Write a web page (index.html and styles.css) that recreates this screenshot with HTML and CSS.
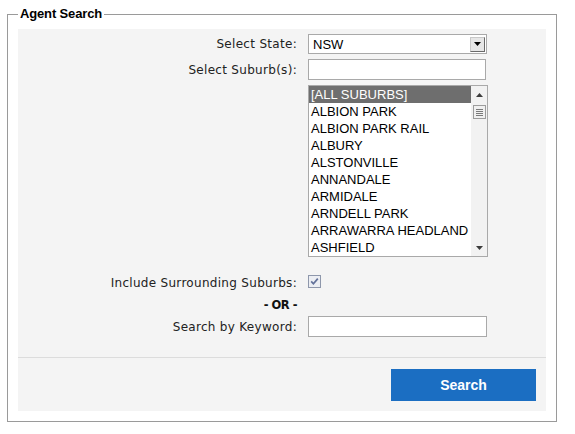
FILE: index.html
```html
<!DOCTYPE html>
<html>
<head>
<meta charset="utf-8">
<link rel="stylesheet" href="styles.css">
</head>
<body>
<fieldset class="agent-search">
  <legend class="legend">Agent Search</legend>
  <div class="panel">
    <div class="fields">
      <div class="row r-state">
        <label class="label">Select State:</label>
        <div class="select">
          <span class="select-value">NSW</span>
          <span class="select-btn"><svg width="7" height="4" viewBox="0 0 7 4"><path d="M0 0H7L3.5 4Z" fill="#000"/></svg></span>
        </div>
      </div>
      <div class="row r-suburb">
        <label class="label">Select Suburb(s):</label>
        <span class="text-input"></span>
      </div>
      <div class="row r-list">
        <span class="label"></span>
        <div class="listbox">
          <ul class="options">
            <li class="option selected">[ALL SUBURBS]</li>
            <li class="option">ALBION PARK</li>
            <li class="option">ALBION PARK RAIL</li>
            <li class="option">ALBURY</li>
            <li class="option">ALSTONVILLE</li>
            <li class="option">ANNANDALE</li>
            <li class="option">ARMIDALE</li>
            <li class="option">ARNDELL PARK</li>
            <li class="option">ARRAWARRA HEADLAND</li>
            <li class="option">ASHFIELD</li>
          </ul>
          <div class="scrollbar">
            <span class="sb-arrow"><svg width="7" height="4" viewBox="0 0 7 4"><path d="M0 4H7L3.5 0Z" fill="#3c3c3c"/></svg></span>
            <span class="sb-thumb"><span class="grip"></span><span class="grip"></span><span class="grip"></span><span class="grip"></span></span>
            <span class="sb-track"></span>
            <span class="sb-arrow"><svg width="7" height="4" viewBox="0 0 7 4"><path d="M0 0H7L3.5 4Z" fill="#3c3c3c"/></svg></span>
          </div>
        </div>
      </div>
      <div class="row r-check">
        <label class="label">Include Surrounding Suburbs:</label>
        <span class="checkbox"><svg width="13" height="13" viewBox="0 0 13 13"><rect x="0.5" y="0.5" width="12" height="12" fill="#eceef3" stroke="#8e97ab"/><path d="M3.2 6.4L5.4 8.8L9.8 3.6" fill="none" stroke="#63729a" stroke-width="1.7"/></svg></span>
      </div>
      <div class="row r-or">
        <span class="label or">- OR -</span>
      </div>
      <div class="row r-keyword">
        <label class="label">Search by Keyword:</label>
        <span class="text-input"></span>
      </div>
    </div>
    <div class="actions">
      <button class="search-btn" type="button">Search</button>
    </div>
  </div>
</fieldset>
</body>
</html>
```
FILE: styles.css
```css
html, body {
  margin: 0;
  padding: 0;
  background: #fff;
}
body {
  font-family: "DejaVu Sans", Verdana, sans-serif;
  font-size: 12px;
  color: #222;
}
.agent-search {
  margin: 6px 0 0 7px;
  width: 528px;
  padding: 7px 10px 10px 10px;
  border: 1px solid #9a9a9a;
  box-sizing: content-box;
}
.legend {
  font-family: "Liberation Sans", Arial, sans-serif;
  font-weight: bold;
  font-size: 13px;
  letter-spacing: -0.15px;
  line-height: 16px;
  padding: 0 2px;
  color: #000;
}
.panel {
  background: #f4f4f4;
}
.fields {
  padding: 5px 0 20px 0;
  border-bottom: 1px solid #dcdcdc;
  display: flex;
  flex-direction: column;
}
.row {
  display: flex;
  align-items: center;
}
.label {
  width: 279px;
  flex: none;
  padding-right: 11px;
  box-sizing: content-box;
  text-align: right;
  letter-spacing: 0.3px;
  white-space: nowrap;
}
.r-state { height: 20px; }
.r-suburb { height: 21px; margin-top: 5px; }
.r-list { margin-top: 5px; align-items: flex-start; }
.r-check { height: 20px; margin-top: 16px; }
.r-or { height: 16px; margin-top: 4px; }
.r-keyword { height: 21px; margin-top: 3px; }

.select {
  width: 179px;
  height: 20px;
  box-sizing: border-box;
  border: 1px solid #a9a9a9;
  background: #fff;
  display: flex;
  align-items: center;
  justify-content: space-between;
  font-family: "Liberation Sans", Arial, sans-serif;
  font-size: 13px;
  color: #000;
}
.select-value {
  padding-left: 4px;
}
.select-btn {
  width: 15px;
  height: 15px;
  box-sizing: border-box;
  margin-right: 1px;
  border: 1px solid;
  border-color: #c8c8c8 #6a6a6a #6a6a6a #c8c8c8;
  background: #e6e6e6;
  display: flex;
  align-items: center;
  justify-content: center;
}
.text-input {
  display: block;
  width: 178px;
  height: 21px;
  box-sizing: border-box;
  border: 1px solid #a9a9a9;
  background: #fff;
}
.r-keyword .text-input { width: 179px; }

.listbox {
  width: 180px;
  height: 172px;
  box-sizing: border-box;
  border: 1px solid #a9a9a9;
  background: #fff;
  display: flex;
}
.options {
  list-style: none;
  margin: 0;
  padding: 0;
  flex: 1;
  overflow: hidden;
  font-family: "Liberation Sans", Arial, sans-serif;
  font-size: 13px;
  color: #000;
}
.option {
  height: 17px;
  line-height: 17px;
  padding-left: 2px;
  white-space: nowrap;
}
.option.selected {
  background: #6e6e6e;
  color: #fff;
}
.scrollbar {
  width: 16px;
  flex: none;
  background: #f2f2f2;
  display: flex;
  flex-direction: column;
  align-items: center;
}
.sb-arrow {
  height: 17px;
  width: 16px;
  display: flex;
  align-items: center;
  justify-content: center;
}
.sb-thumb {
  width: 13px;
  height: 14px;
  box-sizing: border-box;
  border: 1px solid #9c9c9c;
  background: #f0f0f0;
  margin-top: 2px;
  display: flex;
  flex-direction: column;
  justify-content: center;
  align-items: center;
  gap: 1px;
}
.grip {
  width: 7px;
  height: 1px;
  background: #7a7a7a;
}
.sb-track {
  flex: 1;
}
.checkbox {
  display: block;
  width: 13px;
  height: 13px;
  align-self: flex-start;
  margin-top: 2px;
}
.checkbox svg { display: block; }
.or {
  font-weight: bold;
  font-size: 11.5px;
  letter-spacing: -0.5px;
  color: #111;
}
.actions {
  display: flex;
  justify-content: flex-end;
  padding: 11px 10px 10px 0;
}
.search-btn {
  width: 145px;
  height: 32px;
  border: none;
  margin: 0;
  padding: 0;
  background: #1b6ec2;
  color: #fff;
  font-family: "Liberation Sans", Arial, sans-serif;
  font-weight: bold;
  font-size: 14px;
  cursor: pointer;
}
```
